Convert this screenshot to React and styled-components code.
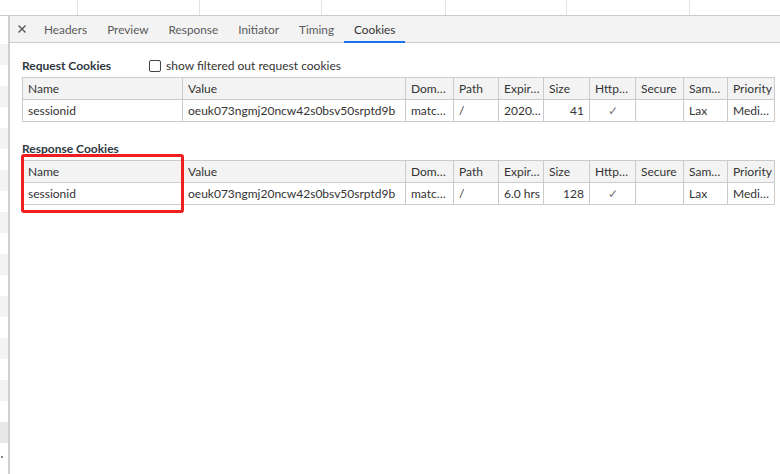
import React from "react";
import styled, { createGlobalStyle } from "styled-components";

const Global = createGlobalStyle`
  html, body { margin: 0; padding: 0; background: #fff; }
  body {
    font-family: Lato, "Noto Sans", Arial, sans-serif;
    font-size: 12px;
    color: #333;
  }
`;

const Page = styled.div`
  width: 780px;
  height: 474px;
  overflow: hidden;
  display: flex;
  flex-direction: column;
`;

const TopGrid = styled.div`
  height: 15px;
  display: flex;
  border-bottom: 1px solid #cbcbcb;
  flex-shrink: 0;
`;

const TopCell = styled.div`
  width: ${(p) => p.w}px;
  flex-shrink: 0;
  border-right: 1px solid #e2e2e2;
  &:last-child { border-right: none; flex: 1; }
`;

const Body = styled.div`
  flex: 1;
  display: flex;
  min-height: 0;
`;

const Gutter = styled.div`
  width: 8px;
  border-right: 2px solid #cfcfcf;
  display: flex;
  flex-direction: column;
  flex-shrink: 0;
`;

const Spacer = styled.div`
  height: 28px;
  flex-shrink: 0;
`;

const Stripe = styled.div`
  height: 21px;
  flex-shrink: 0;
  background: ${(p) => (p.sel ? "#e8e8e8" : p.odd ? "#f3f3f3" : "#fff")};
`;

const Dot = styled.div`
  width: 2px;
  height: 2px;
  background: #888;
  margin: 13px 0 0 1px;
`;

const Panel = styled.div`
  flex: 1;
  display: flex;
  flex-direction: column;
`;

const TabBar = styled.div`
  height: 26px;
  background: #f3f3f3;
  border-bottom: 1px solid #cbcbcb;
  display: flex;
  align-items: stretch;
`;

const Close = styled.div`
  width: 24px;
  display: flex;
  align-items: center;
  justify-content: center;
`;

const Tab = styled.div`
  padding: 0 10px;
  display: flex;
  align-items: center;
  font-size: 11.8px;
  color: ${(p) => (p.active ? "#333" : "#5a5a5a")};
  position: relative;
  ${(p) =>
    p.active &&
    `&::after {
      content: "";
      position: absolute;
      left: 0; right: 0; bottom: -1px;
      height: 2px;
      background: #1a73e8;
    }`}
`;

const Content = styled.div`
  padding: 11px 6px 0 12px;
`;

const Section = styled.div`
  margin-bottom: 15px;
`;

const TitleRow = styled.div`
  height: 23px;
  display: flex;
  align-items: center;
`;

const Title = styled.div`
  font-weight: bold;
  color: #303942;
  margin-right: 38px;
`;

const Check = styled.label`
  display: flex;
  align-items: center;
  gap: 5px;
  color: #333;
`;

const Box = styled.span`
  width: 10px;
  height: 10px;
  border: 1px solid #444;
  border-radius: 2px;
  background: #fff;
`;

const TableWrap = styled.div`
  position: relative;
`;

const Table = styled.table`
  border-collapse: collapse;
  table-layout: fixed;
  width: 752px;
  border: 1px solid #cbcbcb;
`;

const Th = styled.th`
  height: 21px;
  padding: 0 5px;
  font-weight: normal;
  text-align: left;
  background: #f3f3f3;
  border: 1px solid #cbcbcb;
  white-space: nowrap;
  overflow: hidden;
  color: #333;
`;

const Td = styled.td`
  height: 21px;
  padding: 0 5px;
  border-left: 1px solid #cbcbcb;
  border-right: 1px solid #cbcbcb;
  white-space: nowrap;
  overflow: hidden;
  text-align: ${(p) => p.align || "left"};
  color: ${(p) => (p.muted ? "#777" : "#333")};
`;

const Highlight = styled.div`
  position: absolute;
  left: -1px;
  top: -6px;
  width: 157px;
  height: 53px;
  border: 3px solid #f01e1e;
  border-radius: 3px;
`;

const widths = [160, 223, 48, 45, 45, 46, 46, 48, 44, 47];
const headers = ["Name", "Value", "Dom…", "Path", "Expir…", "Size", "Http…", "Secure", "Sam…", "Priority"];

const CookieTable = ({ row, marked }) => (
  <TableWrap>
    <Table>
      <colgroup>
        {widths.map((w, i) => (
          <col key={i} style={{ width: w }} />
        ))}
      </colgroup>
      <thead>
        <tr>
          {headers.map((h) => (
            <Th key={h}>{h}</Th>
          ))}
        </tr>
      </thead>
      <tbody>
        <tr>
          <Td>sessionid</Td>
          <Td>oeuk073ngmj20ncw42s0bsv50srptd9b</Td>
          <Td>matc…</Td>
          <Td>/</Td>
          <Td>{row.expires}</Td>
          <Td align="right">{row.size}</Td>
          <Td align="center" muted>✓</Td>
          <Td></Td>
          <Td>Lax</Td>
          <Td>Medi…</Td>
        </tr>
      </tbody>
    </Table>
    {marked && <Highlight />}
  </TableWrap>
);

const topCols = [77, 121, 121, 123, 120, 122, 96];
const tabs = ["Headers", "Preview", "Response", "Initiator", "Timing", "Cookies"];

export default function App() {
  const stripes = [];
  for (let i = 0; i < 19; i++) stripes.push(i);
  return (
    <Page>
      <Global />
      <TopGrid>
        {topCols.map((w, i) => (
          <TopCell key={i} w={w} />
        ))}
      </TopGrid>
      <Body>
        <Gutter>
          <Spacer />
          {stripes.map((i) => (
            <Stripe key={i} odd={i % 2 === 0} sel={i === 18} />
          ))}
          <Dot />
        </Gutter>
        <Panel>
          <TabBar>
            <Close>
              <svg width="8" height="8" viewBox="0 0 8 8">
                <path d="M0.5 0.5L7.5 7.5M7.5 0.5L0.5 7.5" stroke="#555" strokeWidth="1.4" />
              </svg>
            </Close>
            {tabs.map((t) => (
              <Tab key={t} active={t === "Cookies"}>
                {t}
              </Tab>
            ))}
          </TabBar>
          <Content>
            <Section>
              <TitleRow>
                <Title>Request Cookies</Title>
                <Check>
                  <Box />
                  show filtered out request cookies
                </Check>
              </TitleRow>
              <CookieTable row={{ expires: "2020…", size: "41" }} />
            </Section>
            <Section>
              <TitleRow>
                <Title>Response Cookies</Title>
              </TitleRow>
              <CookieTable row={{ expires: "6.0 hrs", size: "128" }} marked />
            </Section>
          </Content>
        </Panel>
      </Body>
    </Page>
  );
}
